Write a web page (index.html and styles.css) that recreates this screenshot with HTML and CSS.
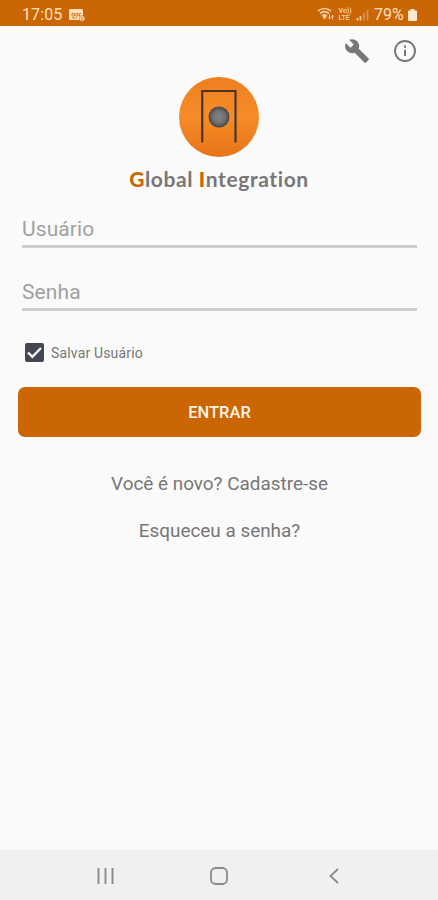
FILE: index.html
```html
<!DOCTYPE html>
<html lang="pt-BR">
<head>
<meta charset="utf-8">
<meta name="viewport" content="width=device-width">
<title>Global Integration</title>
<link rel="stylesheet" href="styles.css">
</head>
<body>
<header class="status">
  <span class="clock">17:05</span>
  <svg class="note" width="17" height="14" viewBox="0 0 17 14"><rect x="0" y="1" width="14" height="11" rx="1.5" fill="#ffe0bd"/><path d="M3 5.500h2.500v2.500H3zM7 5.500h2v2.500H7zM10.500 8V5.500H12M3 10h5" fill="none" stroke="#cb6604" stroke-width=".8"/><circle cx="13" cy="10.500" r="2.800" fill="#ffe0bd" stroke="#cb6604" stroke-width=".6"/><path d="M13 9v3" stroke="#cb6604"/></svg>
  <svg class="signals" width="53" height="17" viewBox="0 0 53 17" fill="none" stroke="#f3cba4">
    <path d="M1 5Q7.500 0 14 5M3 7.500Q7.500 3.700 12 7.500M5.200 10Q7.500 8 9.800 10" stroke-width="1.700"/><path d="M6 10.500h3L7.500 13z" fill="#f3cba4"/><path d="M12.500 8.500V13M11 11.500l1.500 1.500 1.500-1.500M15.500 13.500V9M14.500 10.500l1-1.500 1 1.500"/>
    <text class="carrier" x="21.500" y="7">Vo))</text><text class="carrier" x="21.500" y="13.500">LTE</text>
    <path d="M40.500 12v2.500M43.500 10v4.500" stroke-width="1.700"/><path d="M47 7v7.500M50.500 4v10.500" stroke="#dd9251" stroke-width="1.700"/>
  </svg>
  <span class="percent">79%</span>
  <svg class="battery" width="9" height="12" viewBox="0 0 9 12"><path d="M2.500 0h4v1.500h1.500Q9 1.500 9 2.500V11q0 1-1 1H1q-1 0-1-1V2.500q0-1 1-1h1.500z" fill="#ffe8d0"/></svg>
</header>
<main>
  <nav class="tools">
    <svg width="26" height="26" viewBox="0 0 24 24"><path fill="#777" d="M22.700 19l-9.100-9.100c.9-2.300.4-5-1.500-6.900-2-2-5-2.400-7.400-1.300L9 6 6 9 1.600 4.700C.4 7.100.9 10.100 2.900 12.100c1.900 1.900 4.600 2.400 6.900 1.500l9.100 9.100c.4.400 1 .4 1.400 0l2.300-2.300c.5-.4.5-1.100.1-1.400z"/></svg>
    <svg width="22" height="22" viewBox="0 0 22 22"><circle cx="11" cy="11" r="10" fill="none" stroke="#777" stroke-width="1.900"/><path d="M11 9.700v6.300M11 5.500v2.200" stroke="#777" stroke-width="2"/></svg>
  </nav>
  <section class="brand">
    <svg width="80" height="80" viewBox="0 0 80 80">
      <defs><linearGradient id="disc" x2="0" y2="1"><stop stop-color="#ee7f20"/><stop offset=".5" stop-color="#f68b28"/><stop offset="1" stop-color="#e87518"/></linearGradient><radialGradient id="ball"><stop stop-color="#858585"/><stop offset=".6" stop-color="#707070"/><stop offset="1" stop-color="#444"/></radialGradient></defs>
      <circle cx="40" cy="40" r="40" fill="url(#disc)"/>
      <path d="M23.200 65.500V14h33.300v51.500" fill="none" stroke="#493522" stroke-width="2.200"/>
      <circle cx="40" cy="40" r="10.500" fill="url(#ball)"/>
    </svg>
    <h1><b>G</b>lobal <b>I</b>ntegration</h1>
  </section>
  <form>
    <input class="field" type="text" placeholder="Usuário" aria-label="Usuário">
    <input class="field" type="password" placeholder="Senha" aria-label="Senha">
    <label class="save"><svg width="19" height="19" viewBox="0 0 19 19"><rect width="19" height="19" rx="2" fill="#444654"/><path d="M3 9.500l4.400 4.300L16 5" fill="none" stroke="#fafafa" stroke-width="2.400"/></svg><span>Salvar Usuário</span></label>
    <button type="button">ENTRAR</button>
  </form>
  <div class="links"><a class="signup">Você é novo? Cadastre-se</a><a class="forgot">Esqueceu a senha?</a></div>
</main>
<footer>
  <svg width="17" height="16" viewBox="0 0 17 16"><path d="M1.500 0v16M8.500 0v16M15.500 0v16" stroke="#8b8b8b" stroke-width="1.900"/></svg>
  <svg class="home" width="18" height="18" viewBox="0 0 18 18"><rect x="1" y="1" width="16" height="16" rx="4.500" fill="none" stroke="#8b8b8b" stroke-width="1.800"/></svg>
  <svg width="10" height="16" viewBox="0 0 10 16"><path d="M9 1L1.500 8 9 15" fill="none" stroke="#8b8b8b" stroke-width="1.800"/></svg>
</footer>
</body>
</html>
```

FILE: styles.css
```css
* { box-sizing: border-box; }
body { margin: 0; height: 900px; display: flex; flex-direction: column; background: #fafafa; color: #777; font-family: Roboto, sans-serif; overflow: hidden; }
svg { display: block; flex: none; }
.status { height: 26px; display: flex; align-items: center; padding: 3px 21px 0 22px; background: #cb6604; color: #ffe0bd; font-size: 16px; line-height: 23px; }
.clock { width: 40px; letter-spacing: .1px; }
.note { margin-left: 7px; }
.signals { margin-left: auto; }
.carrier { font-size: 7px; font-weight: 700; fill: #f3cba4; stroke: none; }
.percent { width: 31px; margin-left: 4px; }
.battery { margin-left: 3px; }
main { flex: 1; }
.tools { height: 51px; padding: 12px 22px 0 0; display: flex; justify-content: flex-end; align-items: flex-start; gap: 24px; }
.tools svg:last-child { margin-top: 2px; }
.brand { display: flex; flex-direction: column; align-items: center; }
h1 { margin: 8px 0 0; height: 28px; font: 700 21px/28px Lato, sans-serif; white-space: nowrap; letter-spacing: .6px; }
h1 b { color: #cb6604; font-weight: 900; }
form { display: flex; flex-direction: column; padding: 18px 17px 0 18px; }
.field { height: 37px; margin: 0 4px 26px; padding: 2px 0 0; border: 0; border-bottom: 3px solid #cdcdcd; border-radius: 0; background: none; font: 400 21px/32px Roboto, sans-serif; letter-spacing: .1px; outline: 0; }
.field::placeholder { color: #a0a0a0; opacity: 1; }
.save { height: 19px; margin: 6px 7px 25px; display: flex; align-items: center; gap: 7px; font-size: 14px; letter-spacing: .16px; }
button { height: 50px; border: 0; border-radius: 7px; padding: 2px 0 0; background: #cb6604; color: #fff4e8; font: 500 16.500px/48px Roboto, sans-serif; }
.links { display: flex; flex-direction: column; align-items: center; margin-top: 35px; padding-left: 1px; gap: 23px; font-size: 18.900px; line-height: 24px; }
footer { height: 50px; display: flex; align-items: center; padding: 2px 99px 0 97px; justify-content: space-between; background: #f0f0f0; }
.home { margin-right: 5px; }
```
